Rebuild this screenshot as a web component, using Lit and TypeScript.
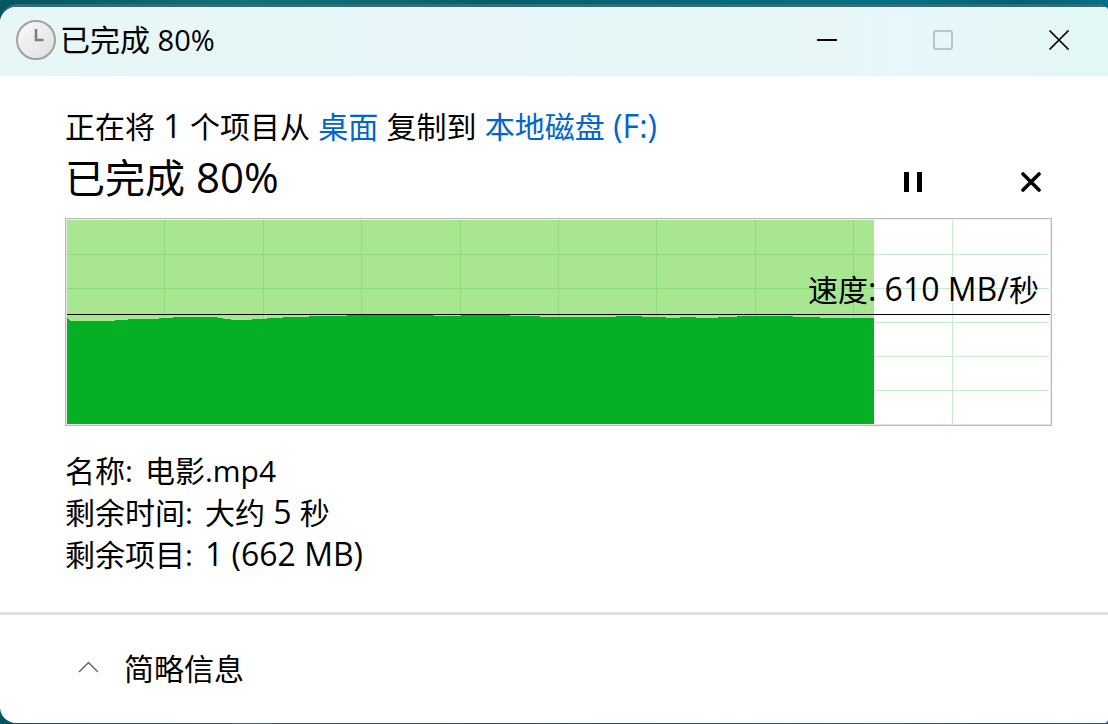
import { LitElement, html, svg, css } from "lit";
import { customElement, property } from "lit/decorators.js";

const PLOT_WIDTH = 983;
const PLOT_HEIGHT = 204;
const COLUMNS = 10;
const ROW_STEP = 34;

/** Throughput samples: [start x, top y] of each step in plot units. */
const SAMPLES: Array<[number, number]> = [
  [0, 98], [1, 99], [2, 100], [3, 101], [48, 100], [61, 99], [92, 98], [106, 97],
  [151, 98], [156, 99], [164, 100], [185, 99], [200, 98], [216, 97], [242, 96],
  [280, 95], [367, 96], [394, 95], [443, 96], [473, 97], [549, 96], [575, 97],
  [599, 98], [613, 97], [629, 98], [651, 97], [670, 96], [726, 97], [753, 98],
];
const PROGRESS_X = 807;

@customElement("speed-chart")
export class SpeedChart extends LitElement {
  @property() speed = "";
  @property() unit = "";

  static styles = css`
    :host {
      display: block;
      position: relative;
      border: 1px solid #b9b9b9;
    }
    .frame {
      border: 1px solid #e6e6e6;
      border-top-color: #f0f0f0;
    }
    .plot {
      display: block;
      width: 100%;
      height: 204px;
    }
    .label {
      position: absolute;
      right: 12px;
      top: 50px;
      line-height: 42px;
    }
    .latin {
      font-size: 32px;
      line-height: 1;
    }
  `;

  private areaPath() {
    let d = `M0 ${PLOT_HEIGHT}`;
    for (const [x, y] of SAMPLES) d += ` H${x} V${y}`;
    return `${d} H${PROGRESS_X} V${PLOT_HEIGHT} Z`;
  }

  private gridPath(end: number) {
    let d = "";
    for (let i = 1; i < COLUMNS; i++) {
      const x = Math.floor(((PLOT_WIDTH + 1) * i) / COLUMNS - 0.5);
      if (x < end) d += `M${x} 0h1V${PLOT_HEIGHT}h-1z`;
    }
    for (let y = ROW_STEP; y < PLOT_HEIGHT; y += ROW_STEP) d += `M0 ${y}H${end}v1H0z`;
    return d;
  }

  render() {
    return html`
      <div class="frame">
        <svg class="plot" viewBox="0 0 ${PLOT_WIDTH} ${PLOT_HEIGHT}" preserveAspectRatio="none"
          shape-rendering="crispEdges" aria-hidden="true">
          ${svg`
            <rect width="983" height="204" fill="#fff"></rect>
            <path d=${this.gridPath(PLOT_WIDTH - 1)} fill="#c5edcb"></path>
            <rect width=${PROGRESS_X} height="204" fill="#a8e691"></rect>
            <path d=${this.gridPath(PROGRESS_X)} fill="#8bde79"></path>
            <path d=${this.areaPath()} fill="#06b025"></path>
            <rect y="94" width="983" height="1" fill="#000"></rect>`}
        </svg>
      </div>
      <span class="label">速度<span class="latin">: ${this.speed}/</span>${this.unit}</span>
    `;
  }
}

@customElement("app-root")
export class AppRoot extends LitElement {
  @property({ type: Number }) percent = 80;

  static styles = css`
    :host {
      display: flex;
      box-sizing: border-box;
      min-height: 100vh;
      padding: 4px 0 1px;
      background: linear-gradient(90deg, #045660 0%, #10707b 22%, #03616c 45%, #007089 80%, #00627a 92%, #036e86 100%);
      font-family: "Open Sans", "Noto Sans CJK SC", sans-serif;
      font-size: 30px;
      color: #000;
    }
    .shade {
      flex: 1;
      display: flex;
      border-top: 3px solid #366e78;
      border-radius: 18px 8px 8px 18px;
      background: #2c525a;
    }
    .window {
      flex: 1;
      display: flex;
      flex-direction: column;
      overflow: hidden;
      border-radius: 16px 4px 4px 16px;
      background: #fff;
    }
    .titlebar {
      display: flex;
      align-items: center;
      box-sizing: border-box;
      height: 69px;
      padding: 0 0 4px 16px;
      background: linear-gradient(90deg, #e8f6f6 0%, #e7f6f7 28%, #e8f6f9 33%, #e8f6f9 47%, #e7f6f7 54%, #e8f6f7 76%, #e6f7fb 83%, #e6f7fa 87%, #e5f7f7 90%, #e3f7f5 100%);
    }
    .clock {
      width: 40px;
      height: 40px;
      margin-right: 4px;
    }
    .caption {
      flex: 1;
      line-height: 42px;
    }
    .caption .latin {
      font-size: 29px;
    }
    .latin {
      font-size: 32px;
      line-height: 1;
    }
    button {
      display: flex;
      align-items: center;
      justify-content: center;
      padding: 0;
      border: 0;
      background: none;
      color: inherit;
      font: inherit;
    }
    .controls {
      display: flex;
      gap: 18px;
    }
    .controls button {
      width: 98px;
      height: 60px;
    }
    .body {
      flex: 1;
      padding: 30px 56px 36px 65px;
    }
    .source,
    .status,
    .details {
      margin: 0;
    }
    .source {
      height: 42px;
      line-height: 42px;
      white-space: nowrap;
    }
    a {
      color: #0066cc;
      text-decoration: none;
    }
    .summary {
      display: flex;
      align-items: center;
      justify-content: space-between;
      box-sizing: border-box;
      height: 70px;
      padding-bottom: 2px;
    }
    .status {
      align-self: flex-start;
      font-size: 40px;
      font-weight: 400;
      line-height: 60px;
    }
    .status .latin {
      font-size: 42px;
    }
    .actions {
      display: flex;
      gap: 76px;
    }
    .actions button {
      width: 42px;
      height: 42px;
    }
    .details {
      padding-top: 24px;
      line-height: 42px;
    }
    .detail {
      display: flex;
      gap: 12px;
      height: 42px;
    }
    .detail dd {
      margin: 0;
    }
    .footer {
      display: flex;
      align-items: center;
      box-sizing: border-box;
      height: 111px;
      padding-left: 78px;
      border-top: 3px solid #e1e1e1;
    }
    .toggle {
      gap: 26px;
      line-height: 42px;
    }
  `;

  render() {
    const status = html`已完成<span class="latin"> ${this.percent}%</span>`;
    return html`
      <div class="shade">
        <main class="window">
          <header class="titlebar">
            <svg class="clock" viewBox="0 0 40 40" aria-hidden="true">
              <defs>
                <linearGradient id="face" x1="0" y1="0" x2="1" y2="1">
                  <stop offset="0" stop-color="#fafafa"></stop>
                  <stop offset="1" stop-color="#dedede"></stop>
                </linearGradient>
              </defs>
              <circle cx="20" cy="20" r="19" fill="url(#face)" stroke="#a1a1a1" stroke-width="2"></circle>
              <path d="M20 9V20H27.500" fill="none" stroke="#808080" stroke-width="2.600"></path>
            </svg>
            <span class="caption">${status}</span>
            <div class="controls">
              <button type="button" aria-label="最小化">
                <svg width="20" height="20" viewBox="0 0 20 20"><path d="M0 9h20v2H0z"></path></svg>
              </button>
              <button type="button" aria-label="最大化" disabled>
                <svg width="20" height="20" viewBox="0 0 20 20">
                  <rect x="1" y="1" width="18" height="18" rx="2" fill="none" stroke="#bac6c6" stroke-width="2"></rect>
                </svg>
              </button>
              <button type="button" aria-label="关闭">
                <svg width="20" height="20" viewBox="0 0 20 20">
                  <path d="M0.500 0.500L19.500 19.500M19.500 0.500L0.500 19.500" stroke="#111" stroke-width="1.700"></path>
                </svg>
              </button>
            </div>
          </header>

          <section class="body">
            <p class="source">正在将<span class="latin"> 1 </span>个项目从<span class="latin"> </span><a href="#desktop">桌面</a><span class="latin"> </span>复制到<span class="latin"> </span><a href="#disk-f">本地磁盘<span class="latin"> (F:)</span></a></p>
            <div class="summary">
              <h1 class="status">${status}</h1>
              <div class="actions">
                <button type="button" aria-label="暂停">
                  <svg width="18" height="20" viewBox="0 0 18 20"><path d="M0 0h5v20H0zM13 0h5v20h-5z"></path></svg>
                </button>
                <button type="button" aria-label="取消">
                  <svg width="20" height="20" viewBox="0 0 20 20">
                    <path d="M2 2L18 18M18 2L2 18" stroke="#000" stroke-width="3.600" stroke-linecap="round"></path>
                  </svg>
                </button>
              </div>
            </div>
            <speed-chart speed="610 MB" unit="秒"></speed-chart>
            <dl class="details">
              <div class="detail"><dt>名称:</dt><dd>电影.mp4</dd></div>
              <div class="detail"><dt>剩余时间:</dt><dd>大约<span class="latin"> 5 </span>秒</dd></div>
              <div class="detail"><dt>剩余项目:</dt><dd><span class="latin">1 (662 MB)</span></dd></div>
            </dl>
          </section>

          <footer class="footer">
            <button class="toggle" type="button" aria-expanded="true">
              <svg width="20" height="16" viewBox="0 0 20 16" aria-hidden="true">
                <path d="M1 11L10.500 1.500L20 11" fill="none" stroke="#666" stroke-width="1.500"></path>
              </svg>
              <span>简略信息</span>
            </button>
          </footer>
        </main>
      </div>
    `;
  }
}
